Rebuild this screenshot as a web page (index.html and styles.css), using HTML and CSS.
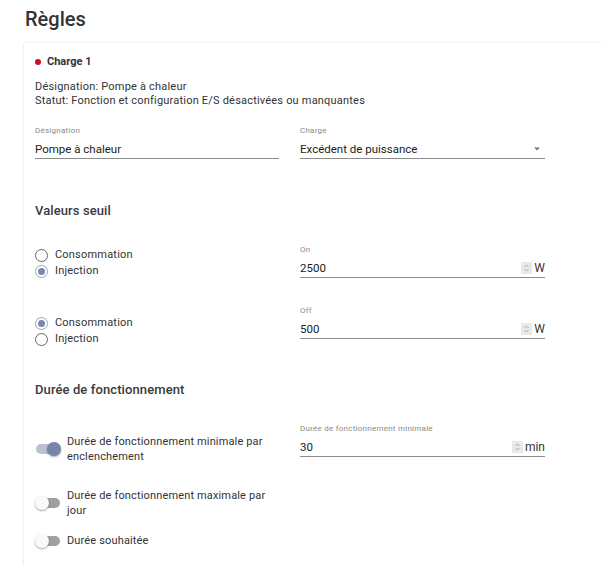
FILE: index.html
```html
<!DOCTYPE html>
<html lang="fr">
<head>
<meta charset="utf-8">
<title>Règles</title>
<link rel="stylesheet" href="styles.css">
</head>
<body>
<h1 class="title">Règles</h1>
<section class="card">
  <div class="charge-head"><span class="dot"></span>Charge 1</div>
  <div class="desc">
    <div>Désignation: Pompe à chaleur</div>
    <div>Statut: Fonction et configuration E/S désactivées ou manquantes</div>
  </div>

  <div class="row row-fields">
    <div class="field">
      <div class="label">Désignation</div>
      <div class="input">Pompe à chaleur</div>
    </div>
    <div class="field">
      <div class="label">Charge</div>
      <div class="input">
        <span class="val">Excédent de puissance</span>
        <svg class="caret" width="6" height="4" viewBox="0 0 6 4"><path d="M0 0.5 L6 0.5 L3 3.5 Z" fill="#777"/></svg>
      </div>
    </div>
  </div>

  <h2 class="section s1">Valeurs seuil</h2>

  <div class="row row-t1">
    <div class="radios r1">
      <div class="radio-line"><span class="radio"></span>Consommation</div>
      <div class="radio-line"><span class="radio on"></span>Injection</div>
    </div>
    <div class="field">
      <div class="label">On</div>
      <div class="input">
        <span class="val">2500</span>
        <span class="spin"><svg width="11" height="12" viewBox="0 0 11 12"><path d="M3.5 5 L5.5 3 L7.5 5 M3.5 7 L5.5 9 L7.5 7" fill="none" stroke="#9a9a9a" stroke-width="0.8"/></svg></span>
        <span class="unit">W</span>
      </div>
    </div>
  </div>

  <div class="row row-t2">
    <div class="radios r2">
      <div class="radio-line"><span class="radio on"></span>Consommation</div>
      <div class="radio-line"><span class="radio"></span>Injection</div>
    </div>
    <div class="field">
      <div class="label">Off</div>
      <div class="input">
        <span class="val">500</span>
        <span class="spin"><svg width="11" height="12" viewBox="0 0 11 12"><path d="M3.5 5 L5.5 3 L7.5 5 M3.5 7 L5.5 9 L7.5 7" fill="none" stroke="#9a9a9a" stroke-width="0.8"/></svg></span>
        <span class="unit">W</span>
      </div>
    </div>
  </div>

  <h2 class="section s2">Durée de fonctionnement</h2>

  <div class="row row-d1">
    <div class="toggle-line tl1">
      <span class="toggle on"><span class="knob"></span></span>
      <span class="toggle-label">Durée de fonctionnement minimale par enclenchement</span>
    </div>
    <div class="field">
      <div class="label">Durée de fonctionnement minimale</div>
      <div class="input">
        <span class="val">30</span>
        <span class="spin"><svg width="11" height="12" viewBox="0 0 11 12"><path d="M3.5 5 L5.5 3 L7.5 5 M3.5 7 L5.5 9 L7.5 7" fill="none" stroke="#9a9a9a" stroke-width="0.8"/></svg></span>
        <span class="unit">min</span>
      </div>
    </div>
  </div>

  <div class="toggle-line tl2">
    <span class="toggle"><span class="knob"></span></span>
    <span class="toggle-label">Durée de fonctionnement maximale par jour</span>
  </div>

  <div class="toggle-line tl3">
    <span class="toggle"><span class="knob"></span></span>
    <span class="toggle-label">Durée souhaitée</span>
  </div>
</section>
</body>
</html>
```

FILE: styles.css
```css
html, body {
  margin: 0;
  padding: 0;
  background: #ffffff;
  overflow: hidden;
}
body {
  font-family: Roboto, "Liberation Sans", Arial, sans-serif;
  color: #333333;
  width: 603px;
  height: 566px;
}
.title {
  margin: 7px 0 12px 25px;
  font-size: 20px;
  line-height: 24px;
  font-weight: 500;
  color: #333333;
}
.card {
  margin-left: 24px;
  width: 579px;
  height: 523px;
  padding: 12px 0 0 11px;
  box-sizing: border-box;
  background: #ffffff;
  box-shadow: 0 0 2px rgba(0, 0, 0, 0.12), 0 1px 2px rgba(0, 0, 0, 0.06);
  clip-path: inset(-4px 0 0 -4px);
}
.charge-head {
  display: flex;
  align-items: center;
  gap: 6px;
  font-size: 11px;
  line-height: 14px;
  font-weight: 700;
  color: #333333;
}
.dot {
  width: 6px;
  height: 6px;
  border-radius: 50%;
  background: #d60a1e;
}
.desc {
  margin-top: 11px;
  font-size: 11px;
  line-height: 14px;
  letter-spacing: 0.2px;
  color: #333333;
}
.row {
  display: grid;
  grid-template-columns: 244px 245px;
  column-gap: 21px;
  align-items: start;
}
.row-fields { margin-top: 18px; }
.field .label {
  font-size: 8px;
  line-height: 10px;
  letter-spacing: 0.25px;
  color: #8a8a8a;
}
.input {
  margin-top: 5px;
  display: flex;
  align-items: center;
  font-size: 11.5px;
  line-height: 16px;
  color: #222222;
  padding-bottom: 1px;
  border-bottom: 1px solid #8c8c8c;
}
.input .val { flex: 1; }
.caret { margin-right: 5px; }
.spin {
  display: flex;
  width: 11px;
  height: 12px;
  background: #e9e9e9;
  margin-right: 2px;
}
.unit {
  font-size: 12px;
  color: #333333;
}
.section {
  margin: 0;
  font-size: 13px;
  line-height: 16px;
  font-weight: 500;
  letter-spacing: 0.1px;
  color: #3a3a3a;
}
.s1 { margin-top: 44px; }
.s2 { margin-top: 35px; }
.row-t1 { margin-top: 26px; }
.row-t2 { margin-top: 27px; }
.r1 { margin-top: 2px; }
.r2 { margin-top: 9px; }
.radio-line {
  display: flex;
  align-items: center;
  gap: 7px;
  font-size: 11px;
  line-height: 16px;
  letter-spacing: 0.2px;
  color: #333333;
}
.radio {
  width: 11px;
  height: 11px;
  border: 1px solid #666666;
  border-radius: 50%;
  display: flex;
  align-items: center;
  justify-content: center;
  flex: none;
}
.radio.on { border-color: #98a2b9; }
.radio.on::after {
  content: "";
  width: 7px;
  height: 7px;
  border-radius: 50%;
  background: #7a88aa;
}
.row-d1 { margin-top: 26px; }
.toggle-line {
  display: flex;
  align-items: center;
  gap: 6px;
}
.tl1 { margin-top: 10px; }
.tl2 { margin-top: 24px; }
.tl3 { margin-top: 15px; }
.toggle-label {
  width: 205px;
  font-size: 11px;
  line-height: 15px;
  letter-spacing: 0.15px;
  color: #333333;
}
.toggle {
  position: relative;
  width: 26px;
  height: 14px;
  flex: none;
  display: flex;
  align-items: center;
}
.toggle::before {
  content: "";
  width: 24px;
  height: 10px;
  margin-left: 1px;
  border-radius: 5px;
  background: #a0a0a0;
}
.toggle.on::before { background: #b9c1d3; }
.knob {
  position: absolute;
  left: 0;
  top: 0;
  width: 14px;
  height: 14px;
  border-radius: 50%;
  background: #fafafa;
  box-shadow: 0 1px 2px rgba(0, 0, 0, 0.35);
}
.toggle.on .knob {
  left: 12px;
  background: #7785a9;
}
```
